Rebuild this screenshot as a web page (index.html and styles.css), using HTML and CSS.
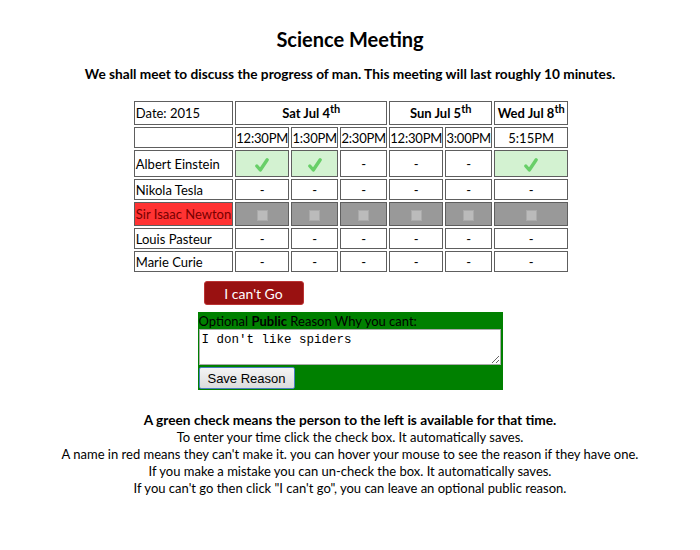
FILE: index.html
```html
<!DOCTYPE html>
<html>
<head>
<meta charset="utf-8">
<link rel="stylesheet" href="styles.css">
</head>
<body>
<div class="page">
  <h1 class="title">Science Meeting</h1>
  <p class="desc">We shall meet to discuss the progress of man. This meeting will last roughly 10 minutes.</p>
  <table class="grid">
    <tr class="r-days">
      <td class="name">Date: 2015</td>
      <th colspan="3">Sat Jul 4<sup>th</sup></th>
      <th colspan="2">Sun Jul 5<sup>th</sup></th>
      <th>Wed Jul 8<sup>th</sup></th>
    </tr>
    <tr class="r-times">
      <td class="name"></td>
      <td class="c-w">12:30PM</td><td class="c-n">1:30PM</td><td class="c-n">2:30PM</td><td class="c-w">12:30PM</td><td class="c-n">3:00PM</td><td class="c-x">5:15PM</td>
    </tr>
    <tr class="r-26">
      <td class="name">Albert Einstein</td>
      <td class="yes"><svg class="check" viewBox="0 0 16 16"><path d="M2.8 9 L6.3 13 L13.2 2.8" fill="none" stroke="#68cf68" stroke-width="3.4" stroke-linecap="round" stroke-linejoin="round"/></svg></td>
      <td class="yes"><svg class="check" viewBox="0 0 16 16"><path d="M2.8 9 L6.3 13 L13.2 2.8" fill="none" stroke="#68cf68" stroke-width="3.4" stroke-linecap="round" stroke-linejoin="round"/></svg></td>
      <td>-</td><td>-</td><td>-</td>
      <td class="yes"><svg class="check" viewBox="0 0 16 16"><path d="M2.8 9 L6.3 13 L13.2 2.8" fill="none" stroke="#68cf68" stroke-width="3.4" stroke-linecap="round" stroke-linejoin="round"/></svg></td>
    </tr>
    <tr class="r-21">
      <td class="name">Nikola Tesla</td>
      <td>-</td><td>-</td><td>-</td><td>-</td><td>-</td><td>-</td>
    </tr>
    <tr class="r-23">
      <td class="name cant">Sir Isaac Newton</td>
      <td class="off"><span class="box"></span></td>
      <td class="off"><span class="box"></span></td>
      <td class="off"><span class="box"></span></td>
      <td class="off"><span class="box"></span></td>
      <td class="off"><span class="box"></span></td>
      <td class="off"><span class="box"></span></td>
    </tr>
    <tr class="r-20">
      <td class="name">Louis Pasteur</td>
      <td>-</td><td>-</td><td>-</td><td>-</td><td>-</td><td>-</td>
    </tr>
    <tr class="r-21">
      <td class="name">Marie Curie</td>
      <td>-</td><td>-</td><td>-</td><td>-</td><td>-</td><td>-</td>
    </tr>
  </table>
  <div class="reason-wrap">
    <button class="cant-btn">I can't Go</button>
    <div class="reason">
      <div class="reason-label">Optional <b>Public</b> Reason Why you cant:</div>
      <textarea class="reason-text">I don't like spiders</textarea>
      <button class="save-btn">Save Reason</button>
    </div>
  </div>
  <div class="help">
    <b class="help-bold">A green check means the person to the left is available for that time.</b><br>
    To enter your time click the check box. It automatically saves.<br>
    A name in red means they can't make it. you can hover your mouse to see the reason if they have one.<br>
    If you make a mistake you can un-check the box. It automatically saves.<br>
    If you can't go then click "I can't go", you can leave an optional public reason.
  </div>
</div>
</body>
</html>
```
FILE: styles.css
```css
body {
  margin: 0;
  background: #fff;
  font-family: "Lato", sans-serif;
  font-size: 13px;
  color: #000;
}
.page {
  display: flex;
  flex-direction: column;
  align-items: center;
  padding-top: 27px;
}
.title {
  font-size: 20px;
  font-weight: bold;
  margin: 0 0 14px 0;
  line-height: 24px;
}
.desc {
  font-size: 13.7px;
  font-weight: bold;
  margin: 0 0 16px 0;
  line-height: 18px;
}
.grid {
  border-collapse: separate;
  border-spacing: 2px;
  margin-left: 2px;
}
.grid td, .grid th {
  border: 1px solid #5e5e5e;
  padding: 0;
  text-align: center;
  line-height: 18px;
  white-space: nowrap;
}
.grid th {
  font-weight: bold;
}
.grid sup {
  font-size: 11px;
  line-height: 0;
}
.grid td.name {
  text-align: left;
  width: 94px;
  padding: 0 1px;
}
.grid .c-w { width: 52px; letter-spacing: -0.2px; }
.grid .c-n { width: 45px; letter-spacing: -0.2px; }
.grid .c-x { width: 72px; }
.r-days td, .r-days th { height: 22px; }
.r-times td { height: 19px; }
.r-26 td { height: 25px; }
.r-21 td { height: 19px; }
.r-23 td { height: 22px; }
.r-20 td { height: 19px; }
.grid td.cant {
  background: #ff3333;
  color: #700;
}
.grid td.yes {
  background: #d3f2d1;
}
.grid td.off {
  background: #999;
}
.check {
  width: 16px;
  height: 16px;
  vertical-align: middle;
}
.box {
  display: inline-block;
  width: 9px;
  height: 9px;
  background: #bbb;
  border: 1px solid #aaa;
  vertical-align: middle;
}
.reason-wrap {
  width: 305px;
  display: flex;
  flex-direction: column;
  align-items: flex-start;
  margin-top: 7px;
}
.cant-btn {
  margin-left: 6px;
  width: 100px;
  height: 24px;
  background: #991111;
  color: #fff;
  border: 1px solid #b33;
  border-radius: 3px;
  font-family: "Lato", sans-serif;
  font-size: 14px;
  padding: 0;
}
.reason {
  margin-top: 7px;
  width: 305px;
  background: #008000;
  display: flex;
  flex-direction: column;
  align-items: flex-start;
  padding: 1px 0 1px 1px;
  box-sizing: border-box;
}
.reason-label {
  line-height: 16px;
  color: #000;
}
.reason-text {
  width: 302px;
  height: 36px;
  box-sizing: border-box;
  font-family: "Liberation Mono", monospace;
  font-size: 12.5px;
  border: 1px solid #aaa;
  padding: 3px 2px 2px;
  margin: 0;
  resize: vertical;
}
.save-btn {
  margin-top: 2px;
  height: 22px;
  width: 96px;
  font-family: "Liberation Sans", sans-serif;
  font-size: 13px;
  background: linear-gradient(#f4f4f4, #dcdcdc);
  border: 1px solid #4a7dbd;
  border-radius: 2px;
  padding: 0;
}
.help {
  margin-top: 21px;
  text-align: center;
  line-height: 17px;
}
.help-bold {
  font-size: 13.7px;
}
```
